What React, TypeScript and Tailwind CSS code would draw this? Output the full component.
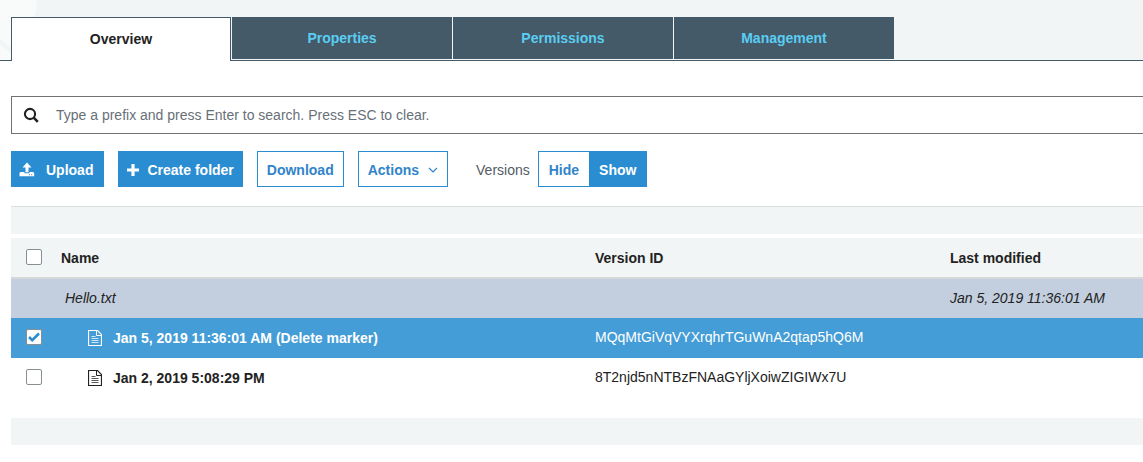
import { useState } from "react";
import type { ReactNode } from "react";

const tabs = ["Overview", "Properties", "Permissions", "Management"];

function DocumentIcon() {
  return (
    <svg width="14" height="16" viewBox="0 0 14 16" fill="none" stroke="currentColor" aria-hidden="true" className="shrink-0">
      <path d="M.5.5H9.500L13.500 4.500V15.500H.5Z" strokeWidth="1.200" />
      <path d="M8.500 .5V5.500H13.500" />
      <path d="M3.500 6.500H7.500M3.500 8.500H10.500M3.500 10.500H10.500M3.500 12.500H10.500" opacity=".75" />
    </svg>
  );
}

function UploadIcon() {
  return (
    <svg width="16" height="16" viewBox="0 0 16 16" fill="currentColor" aria-hidden="true">
      <path d="M8 .6 3.500 5.600H6.500V10.200H9.500V5.600H12.500Z" />
      <path fillRule="evenodd" d="M1.500 10H5.500V11.300H10.500V10H14L15.200 11V14.200H.5V11ZM10 12.300V13.300H11V12.300ZM12.200 12.300V13.300H13.200V12.300Z" />
    </svg>
  );
}

function SearchIcon() {
  return (
    <svg width="16" height="16" viewBox="0 0 16 16" fill="none" stroke="currentColor" aria-hidden="true">
      <circle cx="7" cy="7" r="5.100" strokeWidth="2.100" />
      <path d="m10.700 10.700 4.100 4.100" strokeWidth="2.600" />
    </svg>
  );
}

function Checkbox({ label, checked, onChange }: { label: string; checked: boolean; onChange: (on: boolean) => void }) {
  return (
    <span className="grid size-4">
      <input
        type="checkbox"
        aria-label={label}
        checked={checked}
        onChange={(e) => onChange(e.target.checked)}
        className="peer col-start-1 row-start-1 size-4 appearance-none rounded-xs border border-[#879091] bg-white"
      />
      <svg viewBox="0 0 16 16" fill="none" stroke="#2a8dd2" strokeWidth="2.600" aria-hidden="true" className="pointer-events-none invisible col-start-1 row-start-1 size-4 peer-checked:visible">
        <path d="m3 8 3.200 3.200L13 4.500" />
      </svg>
    </span>
  );
}

function OutlineButton({ children }: { children: ReactNode }) {
  return (
    <button type="button" className="flex h-9 items-center gap-[9px] border border-[#2a8dd2] bg-white px-[9px] pt-0.5 font-bold text-[#3184c9]">
      {children}
    </button>
  );
}

export default function App() {
  const [tab, setTab] = useState("Overview");
  const [show, setShow] = useState(true);
  const [marker, setMarker] = useState(true);
  const [older, setOlder] = useState(false);

  return (
    <div className="overflow-x-hidden bg-white font-['Liberation_Sans',Arial,sans-serif] text-sm leading-5 text-[#222]">
      <nav className="relative flex border-b border-[#445a68] bg-[#f2f5f6] pt-4 pl-[11px]">
        <svg width="37" height="60" viewBox="0 0 37 60" aria-hidden="true" className="absolute top-0 left-0">
          <path d="M0 0H37Q36 12 32 24L12 60H0Z" fill="#f9fbfa" />
          <path d="M0 41Q5 47 12 51" fill="none" stroke="#f2f5f6" strokeWidth="4" />
        </svg>
        {tabs.map((name) => (
          <button
            key={name}
            type="button"
            onClick={() => setTab(name)}
            className={
              tab === name
                ? "relative mt-px -mb-px h-11 w-[220px] border border-b-0 border-[#445a68] bg-white pb-0.5 font-bold"
                : "mt-px mb-px ml-px h-[42px] w-[220px] bg-[#445a68] font-bold text-[#5bcdf2]"
            }
          >
            {name}
          </button>
        ))}
      </nav>

      <main className="pt-[35px] pl-[11px]">
        <label className="flex h-[38px] items-center gap-[17px] border border-r-0 border-[#707374] pl-[11px]">
          <SearchIcon />
          <input
            type="search"
            aria-label="Search by prefix"
            placeholder="Type a prefix and press Enter to search. Press ESC to clear."
            className="h-full min-w-0 flex-1 outline-none placeholder:text-[#687078]"
          />
        </label>

        <div className="flex items-center pt-[17px] pb-[19px]">
          <div className="flex gap-3.5">
            <button type="button" className="flex h-9 items-center gap-[11px] bg-[#2a8dd2] pt-0.5 pr-[11px] pl-2 font-bold text-white">
              <UploadIcon />
              Upload
            </button>
            <button type="button" className="flex h-9 items-center gap-2 bg-[#2a8dd2] px-[9px] pt-0.5 font-bold text-white">
              <svg width="12" height="12" viewBox="0 0 12 12" fill="currentColor" aria-hidden="true">
                <path d="M4.400 0H7.600V4.400H12V7.600H7.600V12H4.400V7.600H0V4.400H4.400Z" />
              </svg>
              Create folder
            </button>
            <OutlineButton>Download</OutlineButton>
            <OutlineButton>
              Actions
              <svg width="10" height="6" viewBox="0 0 10 6" fill="none" stroke="currentColor" strokeWidth="1.200" aria-hidden="true">
                <path d="m1 1 4 4 4-4" />
              </svg>
            </OutlineButton>
          </div>
          <span className="ml-7 pt-0.5 text-[#545b64]">Versions</span>
          <div className="ml-2 flex h-9 border border-[#2a8dd2] font-bold">
            <button type="button" aria-pressed={!show} onClick={() => setShow(false)} className={show ? "bg-white px-2.5 pt-0.5 text-[#3184c9]" : "bg-[#2a8dd2] px-2.5 pt-0.5 text-white"}>
              Hide
            </button>
            <button type="button" aria-pressed={show} onClick={() => setShow(true)} className={show ? "bg-[#2a8dd2] px-2.5 pt-0.5 text-white" : "bg-white px-2.5 pt-0.5 text-[#3184c9]"}>
              Show
            </button>
          </div>
        </div>

        <div className="h-7 border-t border-[#dcdfdf] bg-[#f2f5f6]" />

        <table className="mt-1 w-full table-fixed border-collapse text-left">
          <colgroup>
            <col className="w-[50px]" />
            <col className="w-[534px]" />
            <col className="w-[355px]" />
            <col />
          </colgroup>
          <thead>
            <tr className="h-10 border-b-2 border-[#d5d8d9] bg-[#f2f5f6]">
              <th className="pb-0.5 pl-[15px]">
                <Checkbox
                  label="Select all versions"
                  checked={marker && older}
                  onChange={(on) => {
                    setMarker(on);
                    setOlder(on);
                  }}
                />
              </th>
              <th>Name</th>
              <th>Version ID</th>
              <th>Last modified</th>
            </tr>
          </thead>
          <tbody>
            <tr className="h-10 bg-[#c3cfdf] italic">
              <td />
              <td className="pb-0.5 pl-1">Hello.txt</td>
              <td />
              <td className="pb-0.5">Jan 5, 2019 11:36:01 AM</td>
            </tr>
            <tr className={marker ? "h-10 bg-[#449dd7] text-white" : "h-10"}>
              <td className="pb-0.5 pl-[15px]">
                <Checkbox label="Select version from Jan 5, 2019" checked={marker} onChange={setMarker} />
              </td>
              <td className="pl-[27px] font-bold">
                <div className="flex items-center gap-[11px]">
                  <DocumentIcon />
                  Jan 5, 2019 11:36:01 AM (Delete marker)
                </div>
              </td>
              <td className="pb-0.5">MQqMtGiVqVYXrqhrTGuWnA2qtap5hQ6M</td>
              <td />
            </tr>
            <tr className={older ? "h-10 bg-[#449dd7] text-white" : "h-10"}>
              <td className="pb-0.5 pl-[15px]">
                <Checkbox label="Select version from Jan 2, 2019" checked={older} onChange={setOlder} />
              </td>
              <td className="pl-[27px] font-bold">
                <div className="flex items-center gap-[11px]">
                  <DocumentIcon />
                  Jan 2, 2019 5:08:29 PM
                </div>
              </td>
              <td className="pb-0.5">8T2njd5nNTBzFNAaGYljXoiwZIGIWx7U</td>
              <td />
            </tr>
          </tbody>
        </table>

        <div className="mt-5 h-[27px] bg-[#f2f5f6]" />
      </main>
    </div>
  );
}
